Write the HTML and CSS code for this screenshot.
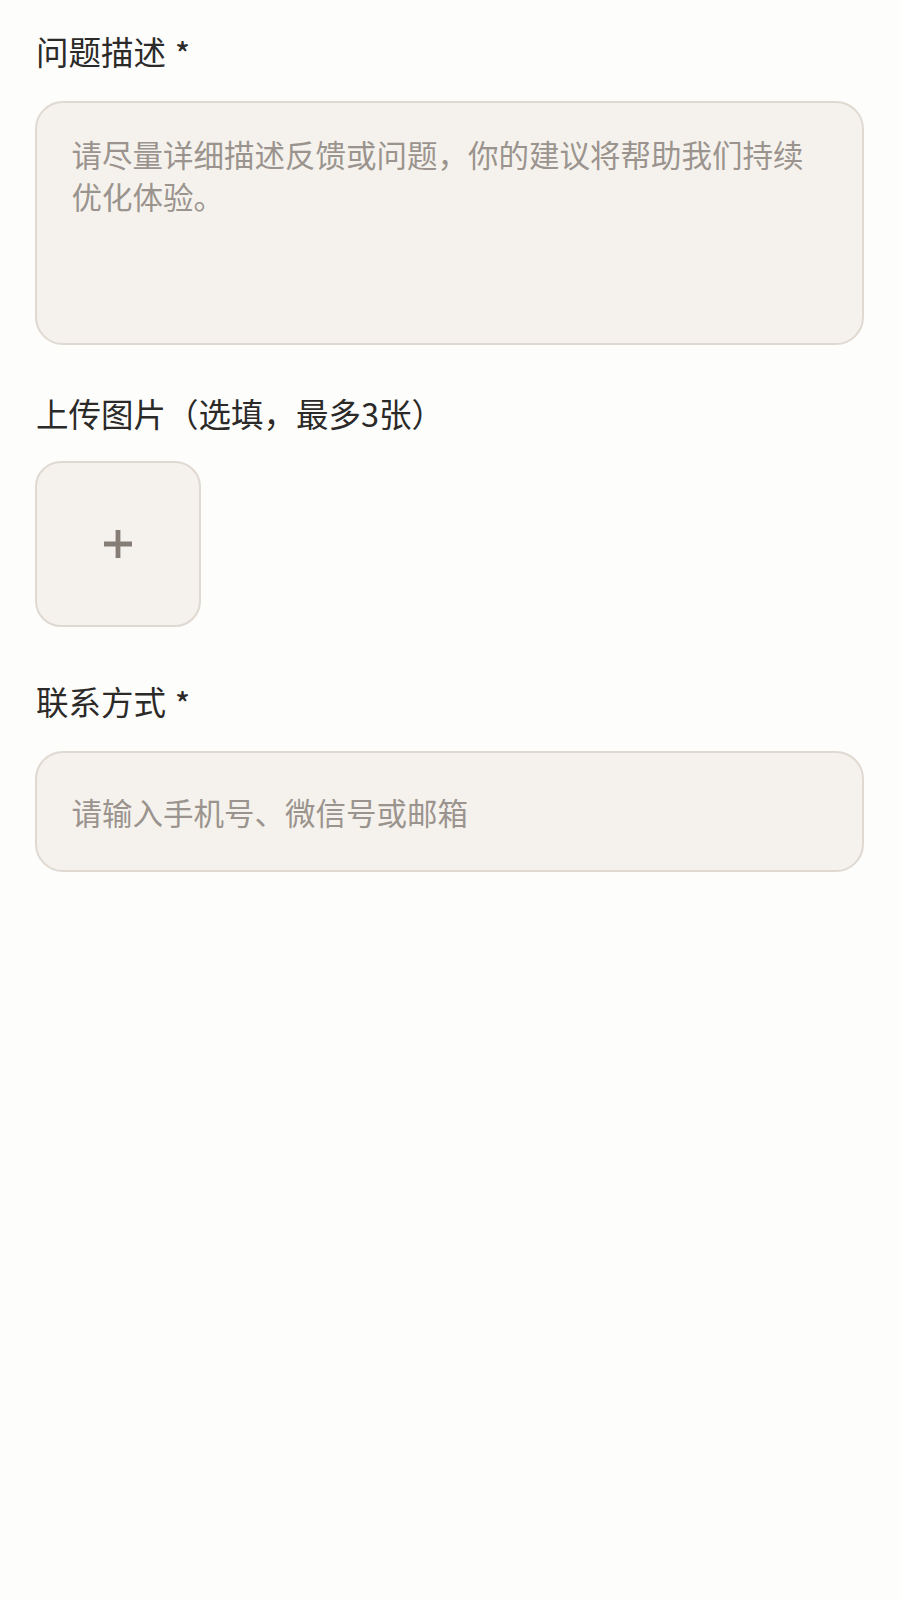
FILE: index.html
```html
<!DOCTYPE html>
<html lang="zh-CN">
<head>
<meta charset="utf-8">
<title>反馈</title>
<link rel="stylesheet" href="styles.css">
</head>
<body>
<form class="form">
  <div class="field field-desc">
    <label class="label" for="desc">问题描述 <span class="req">*</span></label>
    <textarea id="desc" class="textarea" placeholder="请尽量详细描述反馈或问题，你的建议将帮助我们持续优化体验。"></textarea>
  </div>
  <div class="field field-upload">
    <div class="label">上传图片（选填，最多3张）</div>
    <div class="uploads">
      <button type="button" class="upload-btn" aria-label="上传图片">
        <svg class="plus" viewBox="0 0 28 28" width="28" height="28"><path d="M14 0v28M0 14h28" stroke="#857d76" stroke-width="4.8" fill="none"/></svg>
      </button>
    </div>
  </div>
  <div class="field">
    <label class="label" for="contact">联系方式 <span class="req">*</span></label>
    <input id="contact" class="input" type="text" placeholder="请输入手机号、微信号或邮箱">
  </div>
</form>
</body>
</html>
```
FILE: styles.css
```css
html, body {
  margin: 0;
  padding: 0;
  background: #fdfdfc;
}
body {
  font-family: "Noto Sans CJK SC", "Noto Sans", sans-serif;
  color: #2e2d2b;
}
.form {
  width: 829px;
  margin: 0 0 0 35px;
  padding-top: 29px;
  display: flex;
  flex-direction: column;
}
.field {
  display: flex;
  flex-direction: column;
  gap: 27px;
}
.field-desc {
  margin-bottom: 46px;
}
.field-upload {
  margin-bottom: 52px;
}
.field-upload .uploads {
  margin-top: -1px;
}
.label {
  display: block;
  font-size: 32.5px;
  line-height: 44px;
  font-weight: 400;
  padding-left: 1px;
  color: #2b2a28;
}
.req {
  font-size: 30px;
  font-weight: 500;
  margin-left: 2px;
}
.textarea, .input {
  box-sizing: border-box;
  width: 829px;
  margin: 0;
  border: 2px solid #dfd9d1;
  background: #f5f2ed;
  border-radius: 28px;
  font-family: "Noto Sans CJK SC", "Noto Sans", sans-serif;
  font-size: 30.5px;
  color: #333;
  outline: none;
}
.textarea {
  height: 244px;
  padding: 29.5px 34.5px;
  line-height: 42px;
  resize: none;
  display: block;
}
.input {
  height: 121px;
  padding: 0 34.5px;
  line-height: 42px;
}
.textarea::placeholder, .input::placeholder {
  color: #9b948e;
  opacity: 1;
}
.uploads {
  display: flex;
  gap: 20px;
}
.upload-btn {
  box-sizing: border-box;
  width: 166px;
  height: 166px;
  margin: 0;
  padding: 0;
  border: 2px solid #dfd9d1;
  background: #f5f2ed;
  border-radius: 26px;
  display: flex;
  align-items: center;
  justify-content: center;
  cursor: pointer;
}
.plus {
  display: block;
}
```
